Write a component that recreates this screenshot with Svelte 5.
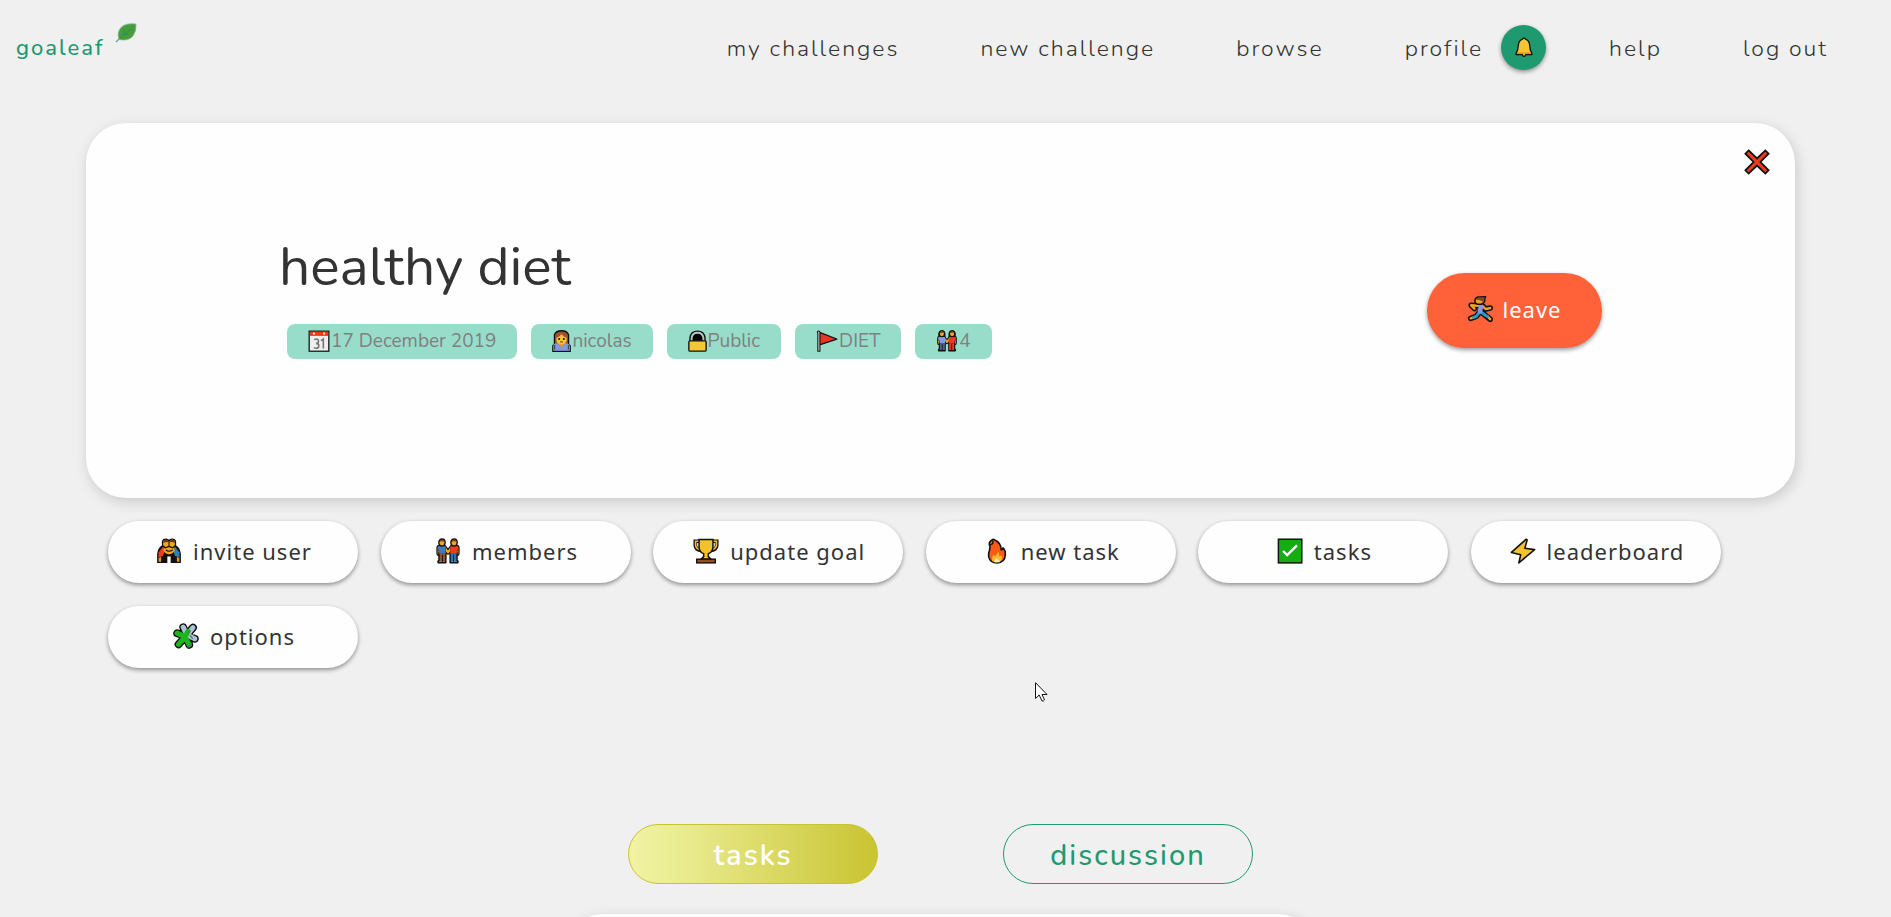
<script>
  const tags = [
    { icon: 'calendar', label: '17 December 2019' },
    { icon: 'person', label: 'nicolas', narrow: true },
    { icon: 'lock', label: 'Public', narrow: true },
    { icon: 'flag', label: 'DIET' },
    { icon: 'couple', label: '4' }
  ];
  const actions = [
    { icon: 'invite', label: 'invite user' },
    { icon: 'members', label: 'members' },
    { icon: 'trophy', label: 'update goal' },
    { icon: 'fire', label: 'new task' },
    { icon: 'check', label: 'tasks' },
    { icon: 'bolt', label: 'leaderboard' },
    { icon: 'puzzle', label: 'options' }
  ];
  let tab = $state('tasks');
</script>

{#snippet pair(leftTop, leftLegs, rightTop, rightLegs, hair)}
  <g fill="none" stroke-linejoin="round">
    <path d="M10 10L14 15.500L18 10M4 10V17M24 10V17" stroke="#111" stroke-width="5" stroke-linecap="round" />
    <path d="M10 10L14 15.500L18 10M4 10V17M24 10V17" stroke="#f2a51f" stroke-width="2.400" stroke-linecap="round" />
    <path d="M4.500 16H11.500V26.500H3.500V25L4.500 24zM16.500 16H23.500V24L24.500 25V26.500H16.500z" stroke="#111" stroke-width="2" />
    <path d="M5 16H11V25.500H5z" fill={leftLegs} /><path d="M17 16H23V25.500H17z" fill={rightLegs} />
    <path d="M8 18V26M20 18V26" stroke="#111" />
    <path d="M4 8.500H11V16.500H4.500V13H3zM24 8.500H17V16.500H23.500V13H25z" stroke="#111" stroke-width="1" />
    <path d="M3 13V10Q3 8.500 5 8.500H10Q11.500 8.500 11.500 10V17H4.500V13z" fill={leftTop} />
    <path d="M25 13V10Q25 8.500 23 8.500H18Q16.500 8.500 16.500 10V17H23.500V13z" fill={rightTop} />
    <ellipse cx="7.500" cy="4.800" rx="3.400" ry="3.800" fill="#f2a51f" stroke="#111" stroke-width="1.500" />
    <ellipse cx="20.500" cy="4.800" rx="3.400" ry="3.800" fill="#f2a51f" stroke="#111" stroke-width="1.500" />
    <path d="M5 4.200Q5 1.800 7.500 1.800T10 4.200Q7.500 3 5 4.200M18 4.200Q18 1.800 20.500 1.800T23 4.200Q20.500 3 18 4.200" fill={hair} />
  </g>
{/snippet}

{#snippet icon(name, narrow = false)}
  <svg class="icon" class:narrow viewBox={narrow ? '2 0 24 28' : '0 0 28 28'} aria-hidden="true">
    {#if name === 'calendar'}
      <rect x="1.500" y="1.500" width="25" height="25.500" fill="#eee" stroke="#111" stroke-width="1.600" />
      <path d="M2.300 2.300H25.700V7.500H2.300z" fill="#ea3b17" />
      <circle cx="7.500" cy="4.500" r="1.400" fill="#fff" /><circle cx="20.500" cy="4.500" r="1.400" fill="#fff" />
      <path d="M8 12.500Q9 11.500 10.500 11.500Q13.300 11.500 13.300 14.300Q13.300 17 10.300 17Q13.800 17 13.800 20Q13.800 23.300 10.500 23.300Q8.500 23.300 7.500 22.200M16.500 13.500L19.500 11.500V23.500" fill="none" stroke="#777" stroke-width="2" />
    {:else if name === 'person'}
      <path d="M5 27V6Q7 1 14 1T23 6V18L25 20V27H3V20L5 18z" fill="#a0522d" stroke="#111" stroke-width="1.700" />
      <path d="M3.500 26.500V20Q4 17 9 17L14 21L19 17Q24 17 24.500 20V26.500z" fill="#8299e0" />
      <path d="M10 16H18L17 19L14 22L11 19z" fill="#e89518" />
      <path d="M7.500 10Q11 9 14 5.500Q17 9 20.500 10V13Q19.500 18.500 14 18.500T7.500 13z" fill="#f8c32e" />
      <circle cx="11" cy="11.500" r="1.200" /><circle cx="17" cy="11.500" r="1.200" />
      <path d="M12 15.500Q14 14.300 16 15.500M5.300 19V25M22.700 19V25" stroke="#222" fill="none" />
    {:else if name === 'lock'}
      <path d="M4.500 15V10Q5.500 1.500 14 1.500T23.500 10V15z" fill="#050505" stroke="#111" stroke-width="2" />
      <path d="M6.500 14V10Q7.500 3.500 14 3.500T21.500 10V14" fill="none" stroke="#b5c8c8" stroke-width="2.400" />
      <rect x="3" y="13.800" width="22" height="13" rx="1.500" fill="#f3c735" stroke="#111" stroke-width="1.700" />
    {:else if name === 'flag'}
      <path d="M4.500 3L26.500 11.500L4.500 19z" fill="#ea3424" stroke="#111" stroke-width="1.600" stroke-linejoin="round" />
      <path d="M1.800 3Q1.800 1.300 3.300 1.300T5 3V27H2.300V5z" fill="#c8cdd0" stroke="#111" stroke-width="1.300" />
    {:else if name === 'couple'}
      <path d="M3.700 9V5Q4 1 7.500 1T11.300 5V9zM16.700 9V5Q17 1 20.500 1T24.300 5V9z" fill="#88451f" stroke="#111" stroke-width="1.500" />
      {@render pair('#829be5', '#53618e', '#ed392b', '#ed392b', '#88451f')}
    {:else if name === 'members'}
      {@render pair('#4279b6', '#96552b', '#f03d1d', '#2878be', '#7a4020')}
    {:else if name === 'invite'}
      <path d="M1.200 27V17Q2 9 8 7.500H20Q26 9 26.800 17V27H15.800V20H12.200V27z" fill="#111" />
      <path d="M8 8.500L2.700 15.500V21L7.500 19.500L9.500 14z" fill="#ed3a20" />
      <path d="M20 8.500L25.300 15.500V21L20.500 19.500L18.500 14z" fill="#347fae" />
      <path d="M2.800 21.500L5.500 20.500V25.500H2.800zM25.200 21.500L22.500 20.500V25.500H25.200z" fill="#ed981d" />
      <path d="M9 9.500H19L20 13.500Q18 17.500 14 17.500T8 13.500z" fill="#f4a71d" />
      <path d="M10.500 13Q14 15.500 18 13" stroke="#111" stroke-width="1.200" fill="none" />
      <path d="M7 8V4Q7.500 1.300 10.500 1.300T14 3.500Q14.500 1.300 17.500 1.300T21 4V8L18 10.500L14 9L10 10.500z" fill="#f4a71d" stroke="#111" stroke-width="1.400" />
      <path d="M7.800 5.500V4Q8 2 10.500 2T13.300 4.500Q10 3.800 7.800 5.500M20.200 5.500V4Q20 2 17.500 2T14.700 4.500Q18 3.800 20.200 5.500" fill="#6d3517" />
      <path d="M14 3.500V8.500" stroke="#111" stroke-width="1.100" />
    {:else if name === 'trophy'}
      <path d="M7 3.500H2.500V8Q3 12.500 8.500 13.500M21 3.500H25.500V8Q25 12.500 19.500 13.500" fill="none" stroke="#111" stroke-width="4" />
      <path d="M7 3.500H2.800V8Q3.500 12 8.500 13M21 3.500H25.200V8Q24.500 12 19.500 13" fill="none" stroke="#f4bb2b" stroke-width="1.800" />
      <path d="M6.500 1.500H21.500V10Q21 15.500 16.500 17V20L19.500 23H8.500L11.500 20V17Q7 15.500 6.500 10z" fill="#f7bf29" stroke="#111" stroke-width="1.600" />
      <path d="M18.500 4V10Q18 13 16 14" fill="none" stroke="#d8cc52" stroke-width="2" />
      <rect x="4" y="22.800" width="20" height="4" fill="#9a4b26" stroke="#111" stroke-width="1.500" />
    {:else if name === 'fire'}
      <path d="M10 1.300Q7 2.500 5.800 5Q5.300 7 6.500 9L6 13Q4.500 16 5 20Q6.500 26.800 14 26.800Q22.500 26.500 23 18Q23.300 13 20.500 10.500Q20 13 18.500 13Q19 5 10 1.300z" fill="#fb5a17" stroke="#111" stroke-width="1.700" stroke-linejoin="round" />
      <path d="M6.500 7.500L9.500 6V3" fill="none" stroke="#111" stroke-width="1.500" />
      <path d="M9 25Q8 20 10.500 18L12 20L15 15Q17 17 16.500 20L19 18.500Q20.500 22 18 25Q13 27.500 9 25z" fill="#fcb72a" />
      <path d="M11 26Q11.500 23 13.500 21.500L15 24L16 23L17 26z" fill="#fff4bd" />
    {:else if name === 'check'}
      <rect x="1.500" y="1.300" width="25.200" height="25.500" fill="#16ad13" stroke="#111" stroke-width="1.600" />
      <path d="M6.500 14L11 18.500L21.500 8" fill="none" stroke="#fff" stroke-width="2.500" />
    {:else if name === 'bolt'}
      <path d="M17.500 1.300L1.500 15.500L11.500 18L9.500 26.800L26.500 12.500L16 11L18.500 2z" fill="#f4c22f" stroke="#111" stroke-width="1.700" stroke-linejoin="round" />
    {:else if name === 'puzzle'}
      <g fill="none" stroke-linecap="round" stroke-linejoin="round">
        <path d="M14 14L11 4.500M14 14L21.500 5M14 14L23.500 17M14 14L17.500 23.500M14 14L6 23M14 14L4.500 11" stroke="#111" stroke-width="8.500" />
        <path d="M15 13L11 4.500M15 13L21.500 5M15 13L23.500 17" stroke="#acc4d6" stroke-width="5.400" />
        <path d="M13 15L17.500 23.500M13 15L6 23M13 15L4.500 11M13 15L16 9" stroke="#1fb51c" stroke-width="5.600" />
        <path d="M18.500 13.500L21 16.500M18.500 8.500L16.500 11M19.500 22.500L16 26" stroke="#667" stroke-width="1.300" />
      </g>
    {:else if name === 'run'}
      <g fill="none" stroke-linecap="round" stroke-linejoin="round">
        <path d="M12 10.500L4.500 10L8 13.500M16 10L20 14L25 13M15 11L14 17M13 18L10 22L4 24M15 17L20 21L25 25" stroke="#111" stroke-width="6" />
        <path d="M12 10.500L4.500 10L8 13.500M16 10L20 14L25 13M10 22L4 24M22 22L25 25" stroke="#f2a51f" stroke-width="2.600" />
        <path d="M13 18L10 22L7 23M15 17L20 21L22 22" stroke="#239cd1" stroke-width="3.200" />
        <path d="M15 11L14 16.500" stroke="#829be5" stroke-width="5" />
        <path d="M8.500 5Q9 1 13 1L20 .9Q19 2.500 19 5.500Q17.500 9 13.500 9Q8.500 9 8.500 5z" fill="#efa21f" stroke="#111" stroke-width="1.600" />
        <path d="M9.300 4Q10.500 1.700 13.500 1.700H19L18 6Q16.500 6.500 15.500 5.500Q14 4 9.300 4z" fill="#86451f" />
      </g>
    {:else if name === 'bell'}
      <path d="M14 1.500Q15.800 1.500 16 3Q21.500 5 22 12Q22 18 25 23V24.500H16.500Q16 27 14 27T11.500 24.500H3V23Q6 18 6 12Q6.500 5 12 3Q12.200 1.500 14 1.500z" fill="#f5c436" stroke="#111" stroke-width="1.800" />
      <path d="M5 21.500H23L24 23.500H4z" fill="#ec951d" />
    {:else if name === 'cross'}
      <path d="M5 1.500L14 10.200L23 1.500L26.500 5L17.700 14L26.500 23L23 26.500L14 17.800L5 26.500L1.500 23L10.300 14L1.500 5z" fill="#ee3b1b" stroke="#111" stroke-width="1.900" />
    {/if}
  </svg>
{/snippet}

<div class="page">
  <header>
    <a class="brand" href="#home">
      goaleaf
      <svg class="leaf" viewBox="0 0 22 20" aria-hidden="true">
        <path d="M1 19L5 15" stroke="#67a99c" stroke-width="1.500" />
        <path d="M21 1Q21.500 8 18 13Q13.500 18.500 4 16.500Q1.500 9 6.500 4Q11.500 -.2 21 1z" fill="#459e3a" stroke="#85b49e" stroke-width=".8" />
        <path d="M5 15L16 6M9 11.500V7M9 11.500H14" stroke="#2c8d58" fill="none" />
      </svg>
    </a>
    <nav>
      <a href="#challenges">my challenges</a>
      <a href="#new">new challenge</a>
      <a href="#browse">browse</a>
      <div class="profile">
        <a href="#profile">profile</a>
        <button class="bell" aria-label="notifications">{@render icon('bell')}</button>
      </div>
      <a href="#help">help</a>
      <a href="#logout">log out</a>
    </nav>
  </header>

  <main>
    <section class="card">
      <button class="close" aria-label="close">{@render icon('cross')}</button>
      <div class="info">
        <h1>healthy diet</h1>
        <ul>
          {#each tags as t}
            <li>{@render icon(t.icon, t.narrow)}<span>{t.label}</span></li>
          {/each}
        </ul>
      </div>
      <button class="leave">{@render icon('run')}<span>leave</span></button>
    </section>

    <div class="actions">
      {#each actions as a}
        <button class="action">{@render icon(a.icon)}<span>{a.label}</span></button>
      {/each}
    </div>

    <div class="tabs">
      {#each ['tasks', 'discussion'] as name}
        <button class="tab" class:active={tab === name} onclick={() => (tab = name)}>{name}</button>
      {/each}
    </div>
    <section class="panel"></section>
  </main>

  <svg class="pointer" viewBox="0 0 13 20" aria-hidden="true">
    <path d="M.5 .7V16.500L4.200 13L7 19Q8.500 19.500 9.500 18L7 12.500H12z" fill="#fff" stroke="#111" />
  </svg>
</div>

<style>
  :global(body) {
    margin: 0;
    background: #f0f0f0;
  }
  .page {
    position: relative;
    height: 100vh;
    overflow: hidden;
    font-family: Nunito, Lato, sans-serif;
    color: #333;
  }
  button {
    border: 0;
    margin: 0;
    padding: 0;
    font-family: inherit;
    color: inherit;
    cursor: pointer;
  }
  a {
    color: inherit;
    text-decoration: none;
  }
  .icon {
    display: block;
    flex: none;
    width: 26px;
    height: 28px;
  }
  header {
    display: flex;
    justify-content: space-between;
    align-items: center;
    height: 96px;
    padding: 0 45px 0 16px;
    letter-spacing: 2px;
  }
  .brand {
    display: flex;
    align-items: center;
    gap: 10px;
    color: #1f9970;
    font-size: 22px;
    font-weight: 500;
  }
  .leaf {
    width: 22px;
    height: 20px;
    margin-bottom: 30px;
  }
  nav {
    display: flex;
    align-items: center;
    gap: 63px;
    font-size: 23px;
    font-weight: 300;
  }
  nav a {
    padding-right: 18px;
  }
  .profile {
    display: flex;
    align-items: center;
  }
  .bell {
    display: grid;
    place-items: center;
    width: 45px;
    height: 45px;
    margin-bottom: 2px;
    border-radius: 50%;
    background: #1f9970;
    box-shadow: 0 2px 4px rgba(0, 0, 0, 0.4);
  }
  .bell .icon {
    width: 20px;
    height: 22px;
  }
  main {
    padding: 27px 96px 0 86px;
  }
  .card {
    position: relative;
    display: flex;
    justify-content: space-between;
    align-items: center;
    padding: 107px 193px 108px;
    border-radius: 40px;
    background: #fefefe;
    box-shadow: 2px 4px 14px rgba(0, 0, 0, 0.16);
  }
  .close {
    position: absolute;
    top: 26px;
    right: 25px;
    background: none;
  }
  .close .icon {
    width: 26px;
    height: 26px;
  }
  .info {
    padding-bottom: 31px;
  }
  h1 {
    margin: 0 0 20px;
    font-size: 55px;
    font-weight: 400;
    line-height: 74px;
  }
  ul {
    display: flex;
    gap: 14px;
    margin: 0 0 0 8px;
    padding: 0;
    list-style: none;
  }
  li {
    display: flex;
    align-items: center;
    gap: 1px;
    height: 33px;
    padding: 0 21px 2px;
    border-radius: 8px;
    background: #98ddca;
    color: #808080;
    font-size: 19px;
  }
  li .icon {
    width: 22px;
    height: 22px;
  }
  li .narrow {
    width: 19px;
  }
  .leave,
  .action {
    display: flex;
    align-items: center;
    justify-content: center;
    gap: 11px;
    padding: 0 0 2px 2px;
    font-family: "Noto Sans", sans-serif;
    font-size: 22px;
    font-weight: 450;
    letter-spacing: 1px;
    box-shadow: 0 2px 4px rgba(0, 0, 0, 0.4);
  }
  .leave {
    gap: 9px;
    height: 75px;
    width: 175px;
    padding-left: 0;
    border-radius: 38px;
    background: #ff6138;
    color: #fff;
  }
  .actions {
    display: grid;
    grid-template-columns: repeat(6, 250px);
    justify-content: space-between;
    row-gap: 23px;
    margin-top: 23px;
    padding: 0 74px 0 22px;
  }
  .action {
    height: 62px;
    border-radius: 31px;
    background: #fefefe;
  }
  .tabs {
    display: flex;
    justify-content: center;
    gap: 125px;
    margin-top: 156px;
  }
  .tab {
    width: 250px;
    height: 60px;
    padding-top: 2px;
    border: 1px solid #1f9970;
    border-radius: 30px;
    background: none;
    color: #1f9970;
    font-size: 29px;
    font-weight: 500;
    letter-spacing: 2px;
  }
  .tab.active {
    border-color: #c9c431;
    background: linear-gradient(90deg, #f2f2a4, #eaec91 20%, #c9c431);
    color: #fff;
    font-weight: 600;
  }
  .panel {
    width: 755px;
    height: 200px;
    margin: 30px auto 0;
    border-radius: 40px;
    background: #fefefe;
    box-shadow: 2px 4px 14px rgba(0, 0, 0, 0.16);
  }
  .pointer {
    position: absolute;
    left: 1035px;
    top: 682px;
    width: 13px;
    height: 20px;
  }
</style>
